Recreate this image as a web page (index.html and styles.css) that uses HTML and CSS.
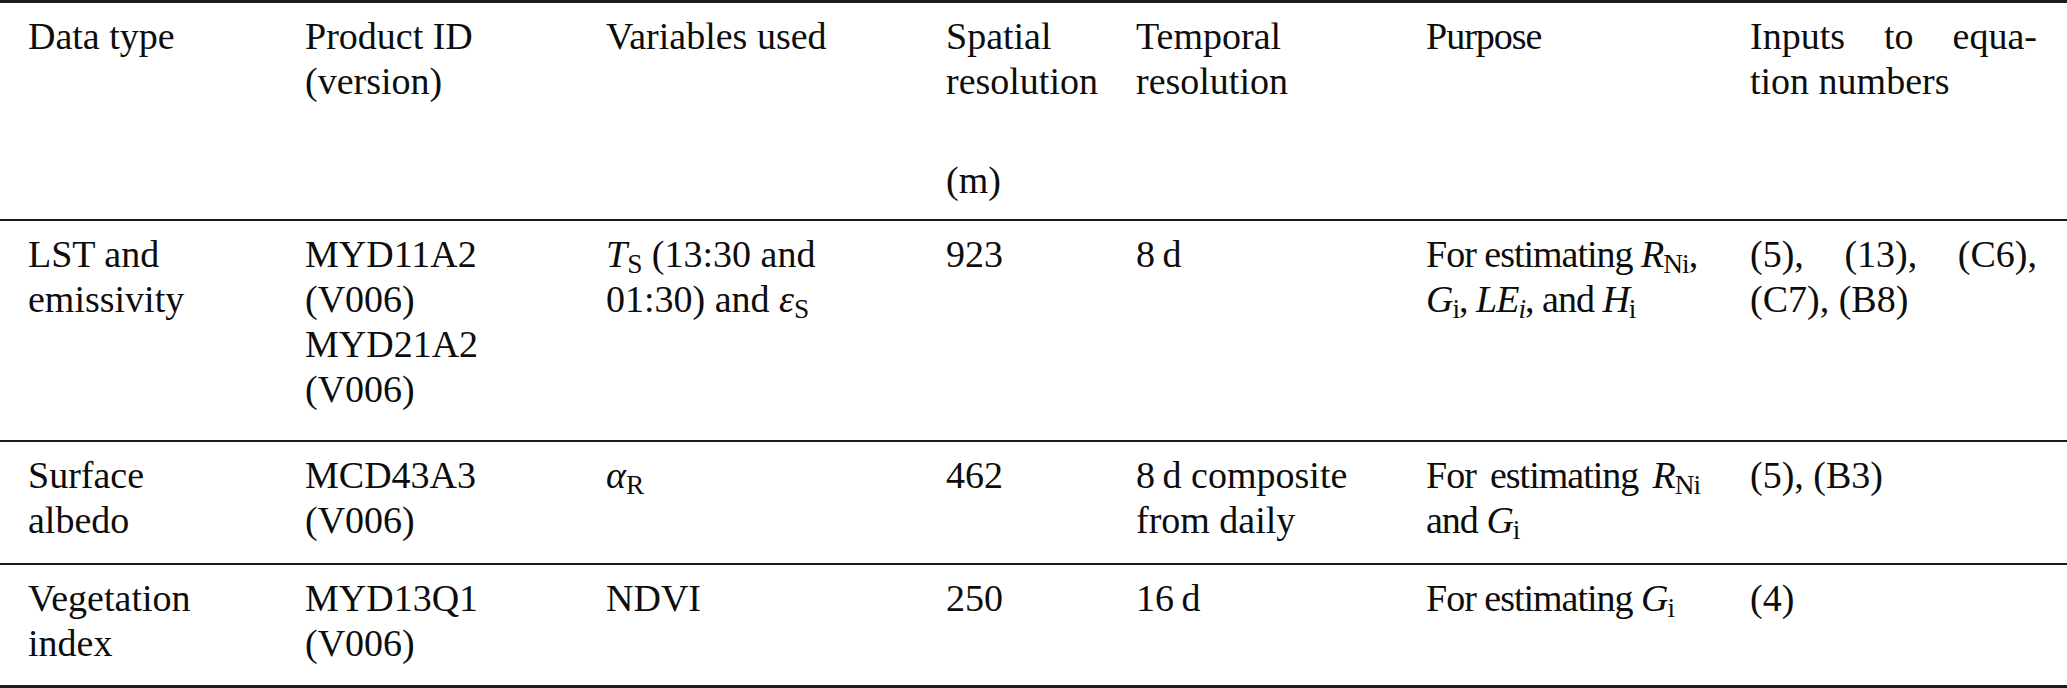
FILE: index.html
```html
<!DOCTYPE html>
<html lang="en">
<head>
<meta charset="utf-8">
<title>Data sources</title>
<link rel="stylesheet" href="styles.css">
</head>
<body>
<table class="data-table">
  <colgroup>
    <col class="c1"><col class="c2"><col class="c3"><col class="c4"><col class="c5"><col class="c6"><col class="c7">
  </colgroup>
  <thead>
    <tr class="head-row">
      <th>Data type</th>
      <th>Product ID<br>(version)</th>
      <th>Variables used</th>
      <th>Spatial<br>resolution<br><br><span class="unit">(m)</span></th>
      <th>Temporal<br>resolution</th>
      <th class="purpose">Purpose</th>
      <th><span class="just">Inputs to equa-</span>tion numbers</th>
    </tr>
  </thead>
  <tbody>
    <tr class="row-1">
      <td>LST and<br>emissivity</td>
      <td>MYD11A2<br>(V006)<br>MYD21A2<br>(V006)</td>
      <td><i class="m">T</i><span class="sub">S</span> (13:30 and<br>01:30) and <i class="m">ε</i><span class="sub">S</span></td>
      <td>923</td>
      <td>8&#8201;d</td>
      <td class="purpose">For estimating <i class="m">R</i><span class="sub">Ni</span>,<br><i class="m">G</i><span class="sub">i</span>, <i class="m">LE</i><i class="sub">i</i>, and <i class="m">H</i><span class="sub">i</span></td>
      <td><span class="just">(5), (13), (C6),</span>(C7), (B8)</td>
    </tr>
    <tr class="row-2">
      <td>Surface<br>albedo</td>
      <td>MCD43A3<br>(V006)</td>
      <td><i class="m">α</i><span class="sub">R</span></td>
      <td>462</td>
      <td>8&#8201;d composite<br>from daily</td>
      <td class="purpose"><span class="just">For estimating <i class="m">R</i><span class="sub">Ni</span></span>and <i class="m">G</i><span class="sub">i</span></td>
      <td>(5), (B3)</td>
    </tr>
    <tr class="row-3">
      <td>Vegetation<br>index</td>
      <td>MYD13Q1<br>(V006)</td>
      <td>NDVI</td>
      <td>250</td>
      <td>16&#8201;d</td>
      <td class="purpose">For estimating <i class="m">G</i><span class="sub">i</span></td>
      <td>(4)</td>
    </tr>
  </tbody>
</table>
</body>
</html>
```

FILE: styles.css
```css
html, body {
  margin: 0;
  padding: 0;
  background: #ffffff;
}

.data-table {
  width: 2067px;
  table-layout: fixed;
  border-collapse: collapse;
  font-family: "Liberation Serif", "Times New Roman", serif;
  font-size: 38px;
  line-height: 45px;
  color: #0d0d0d;
  border-top: 3px solid #1c1c1c;
  border-bottom: 3px solid #1c1c1c;
}

.c1 { width: 277px; }
.c2 { width: 301px; }
.c3 { width: 340px; }
.c4 { width: 190px; }
.c5 { width: 290px; }
.c6 { width: 324px; }
.c7 { width: 345px; }

.data-table th,
.data-table td {
  font-weight: normal;
  text-align: left;
  vertical-align: top;
  padding: 11px 0 20px 28px;
}

.data-table .purpose {
  padding-right: 22px;
  letter-spacing: -1px;
}

.data-table th:nth-child(7),
.data-table td:nth-child(7) {
  padding-right: 30px;
}

.head-row th {
  padding-bottom: 16px;
  border-bottom: 2px solid #1c1c1c;
}

.row-1 td,
.row-2 td {
  border-bottom: 2px solid #1c1c1c;
}

.row-1 td { padding-bottom: 28px; }
.row-2 td { padding-bottom: 20px; }
.row-3 td { padding-bottom: 19px; }

.unit {
  display: inline-block;
  margin-top: 9px;
}

.just {
  display: block;
  text-align: justify;
  text-align-last: justify;
}

.m {
  font-style: italic;
}

.sub {
  font-size: 0.72em;
  line-height: 0;
  vertical-align: -0.22em;
}

i.sub {
  font-style: italic;
}
```
